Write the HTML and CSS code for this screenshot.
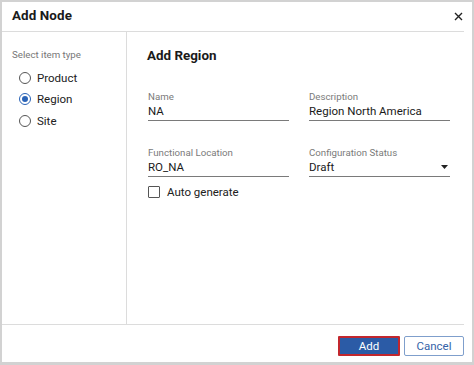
FILE: index.html
```html
<!DOCTYPE html>
<html>
<head>
<meta charset="utf-8">
<link rel="stylesheet" href="styles.css">
</head>
<body>
<div class="frame">
  <div class="dialog">
    <div class="header">
      <span class="title">Add Node</span>
      <svg class="close" width="9" height="9" viewBox="0 0 9 9"><path d="M1 1L8 8M8 1L1 8" stroke="#222" stroke-width="1.4" fill="none"/></svg>
    </div>
    <div class="body">
      <div class="side">
        <div class="side-label">Select item type</div>
        <div class="radio-row"><span class="radio"></span><span class="radio-text">Product</span></div>
        <div class="radio-row"><span class="radio checked"></span><span class="radio-text">Region</span></div>
        <div class="radio-row"><span class="radio"></span><span class="radio-text">Site</span></div>
      </div>
      <div class="main">
        <div class="main-title">Add Region</div>
        <div class="fields">
          <div class="field">
            <div class="field-label">Name</div>
            <div class="field-value">NA</div>
          </div>
          <div class="field">
            <div class="field-label">Description</div>
            <div class="field-value">Region North America</div>
          </div>
          <div class="field">
            <div class="field-label">Functional Location</div>
            <div class="field-value">RO_NA</div>
          </div>
          <div class="field">
            <div class="field-label">Configuration Status</div>
            <div class="field-value select"><span>Draft</span><svg class="caret" width="7" height="4" viewBox="0 0 7 4"><path d="M0 0H7L3.5 4Z" fill="#222"/></svg></div>
          </div>
        </div>
        <div class="check-row"><span class="checkbox"></span><span class="check-text">Auto generate</span></div>
      </div>
    </div>
    <div class="footer">
      <button class="btn btn-primary">Add</button>
      <button class="btn btn-secondary">Cancel</button>
    </div>
  </div>
</div>
</body>
</html>
```
FILE: styles.css
```css
* { box-sizing: border-box; }
html, body { margin: 0; padding: 0; background: #fff; }
body { font-family: Roboto, "Liberation Sans", Arial, sans-serif; color: #212121; }

.frame {
  width: 474px;
  height: 365px;
  border: 2px solid #d2d2d2;
  border-bottom-width: 3px;
  background: #fff;
}
.dialog {
  height: 100%;
  margin-right: 8px;
  display: flex;
  flex-direction: column;
}
.header {
  height: 30px;
  border-bottom: 1px solid #dcdcdc;
  display: flex;
  align-items: center;
  justify-content: space-between;
  padding: 0 1px 2px 10px;
}
.title { font-size: 13.4px; font-weight: 700; color: #1a1a1a; letter-spacing: 0.1px; }
.close { display: block; margin-top: 1px; }

.body { flex: 1; display: flex; min-height: 0; }
.side {
  width: 125px;
  border-right: 1px solid #dcdcdc;
  padding: 17px 0 0 10px;
}
.side-label { font-size: 9.7px; line-height: 12px; color: #777; }
.radio-row {
  display: flex;
  align-items: center;
  height: 21.5px;
  margin-left: 7px;
  gap: 6px;
}
.side-label + .radio-row { margin-top: 6px; }
.radio {
  width: 12px; height: 12px;
  border: 1.5px solid #555;
  border-radius: 50%;
  display: flex; align-items: center; justify-content: center;
}
.radio.checked { border-color: #2a63b7; }
.radio.checked::after {
  content: "";
  width: 6px; height: 6px;
  border-radius: 50%;
  background: #2a63b7;
}
.radio-text { font-size: 11.5px; color: #212121; }

.main { flex: 1; padding: 16px 0 0 20px; }
.main-title { font-size: 13.4px; line-height: 16px; font-weight: 700; color: #1a1a1a; }
.fields {
  margin-top: 27px;
  margin-left: 1px;
  display: grid;
  grid-template-columns: 141px 141px;
  column-gap: 20px;
  row-gap: 26px;
}
.field-label { font-size: 9.7px; line-height: 12px; color: #7a7a7a; }
.field-value {
  font-size: 11.5px;
  line-height: 16px;
  padding-bottom: 1px;
  border-bottom: 1.5px solid #7a7a7a;
  color: #1a1a1a;
}
.select { display: flex; justify-content: space-between; align-items: center; }
.caret { margin-right: 2px; }
.check-row {
  margin-top: 8px;
  margin-left: 1px;
  display: flex;
  align-items: center;
  gap: 7px;
}
.checkbox {
  width: 12px; height: 12px;
  border: 1.5px solid #555;
  border-radius: 1px;
}
.check-text { font-size: 11.5px; color: #212121; }

.footer {
  height: 38px;
  border-top: 1px solid #dcdcdc;
  display: flex;
  justify-content: flex-end;
  align-items: flex-start;
  padding-top: 11px;
  gap: 3px;
}
.btn {
  height: 20px;
  font-family: Roboto, "Liberation Sans", Arial, sans-serif;
  font-size: 11.5px;
  padding: 0;
  border-radius: 2px;
  cursor: pointer;
}
.btn-primary {
  width: 62px;
  background: #2b5ba6;
  color: #fff;
  border: 2px solid #c2272e;
  border-radius: 1px;
  margin-right: 1px;
}
.btn-secondary {
  width: 60px;
  background: #fff;
  color: #3563a8;
  border: 1px solid #7f9fcc;
}
```
